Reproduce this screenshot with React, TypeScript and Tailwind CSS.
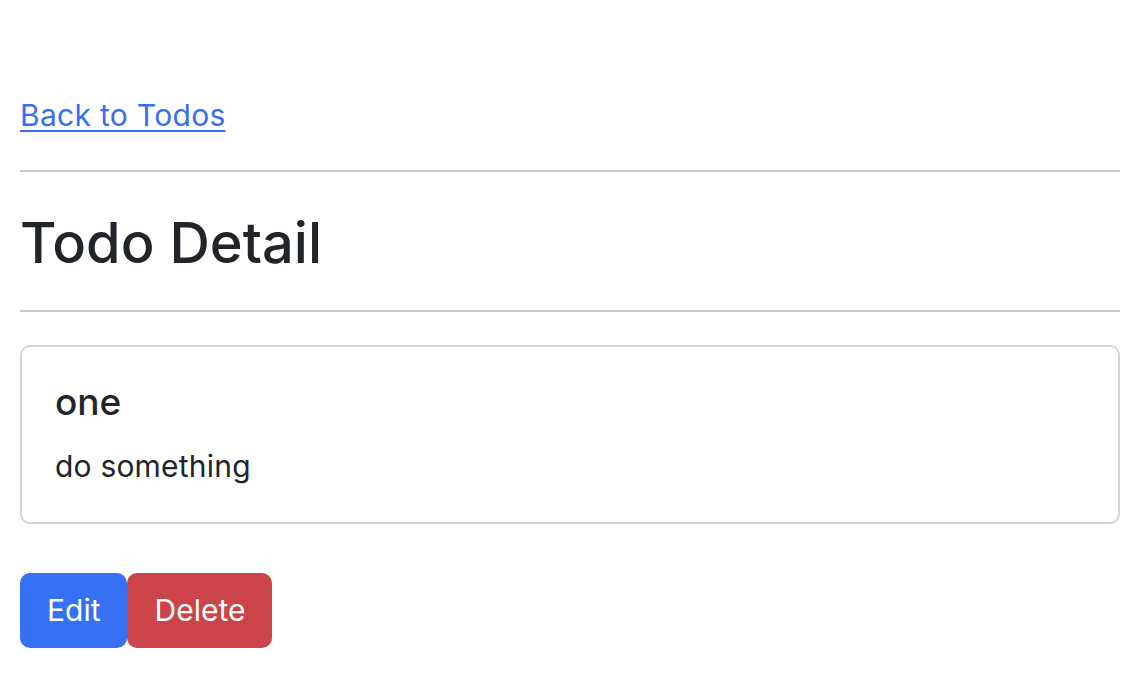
export default function App() {
  return (
    <div className="min-h-screen bg-white px-[20px] pt-[93px] font-['Inter',sans-serif] text-[#212529]">
      <a href="#" className="text-[30px] leading-[45px] tracking-[0.3px] text-[#3670f0] underline decoration-[2px] underline-offset-[4px]">
        Back to Todos
      </a>
      <hr className="mt-[32px] border-t-2 border-[#c9c9c9]" />
      <h1 className="mt-[38px] text-[56px] leading-[67px] font-medium">Todo Detail</h1>
      <hr className="mt-[33px] border-t-2 border-[#c9c9c9]" />
      <div className="mt-[33px] rounded-[10px] border-2 border-[#d6d6d6] px-[33px] pt-[33px] pb-[33px]">
        <h5 className="text-[37px] leading-[44px] font-medium">one</h5>
        <p className="mt-[20px] text-[30px] leading-[45px] tracking-[0.2px]">do something</p>
      </div>
      <div className="mt-[49px] flex">
        <button className="h-[75px] rounded-[10px] bg-[#3571f2] px-[27px] text-[30px] text-white">Edit</button>
        <button className="h-[75px] rounded-[10px] bg-[#cb444a] px-[27px] text-[30px] text-white">Delete</button>
      </div>
    </div>
  );
}
